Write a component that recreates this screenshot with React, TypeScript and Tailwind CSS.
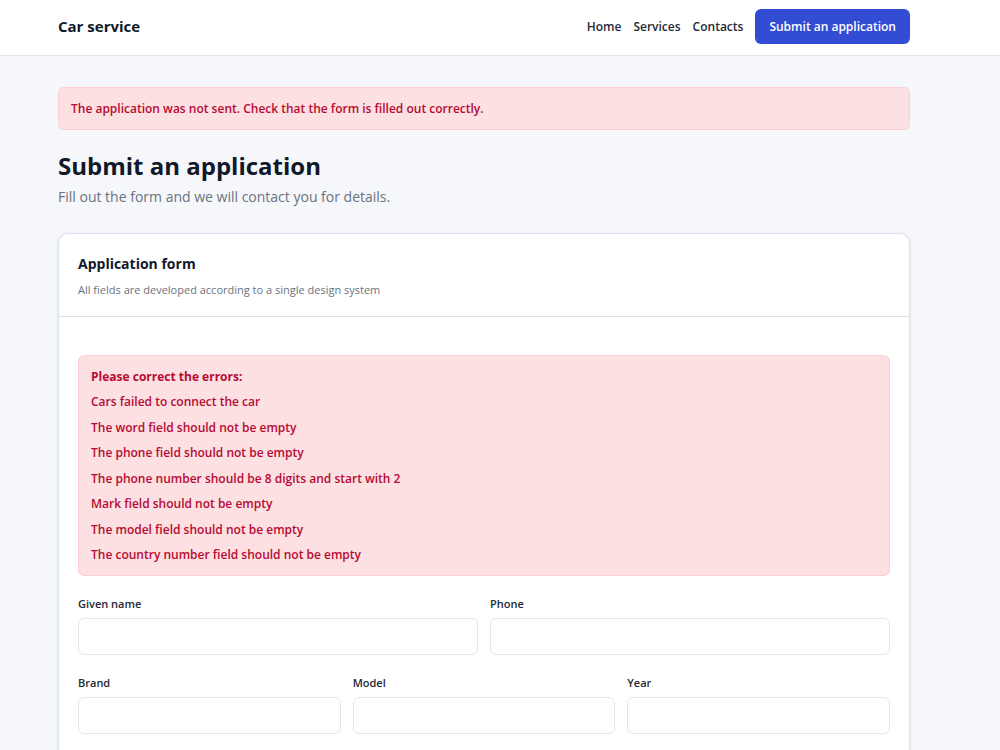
import React from "react";

const navLinks = ["Home", "Services", "Contacts"];

const errors = [
  "Cars failed to connect the car",
  "The word field should not be empty",
  "The phone field should not be empty",
  "The phone number should be 8 digits and start with 2",
  "Mark field should not be empty",
  "The model field should not be empty",
  "The country number field should not be empty",
];

function Field({ id, label, type = "text" }: { id: string; label: string; type?: string }) {
  return (
    <div className="flex min-w-0 flex-col gap-1.5">
      <label htmlFor={id} className="text-[11px] leading-4 font-semibold text-[#1f2937]">
        {label}
      </label>
      <input
        id={id}
        name={id}
        type={type}
        className="h-[37px] w-full rounded-md border border-[#dfe7f1] bg-white px-3 text-[12px] text-[#111827] outline-none focus:border-[#324dd3]"
      />
    </div>
  );
}

export default function App() {
  return (
    <div className="min-h-screen overflow-x-hidden bg-[#f5f7fb] font-['Open_Sans','Noto_Sans',sans-serif] text-[#111827]">
      <header className="border-b border-[#e2e8f0] bg-white">
        <div className="flex items-center justify-between pt-[9px] pr-[90px] pb-[11px] pl-[58px]">
          <a href="#" className="text-[15px] font-bold">
            Car service
          </a>
          <nav className="flex items-center gap-3 text-[12px] font-semibold text-[#1f2937]">
            {navLinks.map((name) => (
              <a key={name} href="#">
                {name}
              </a>
            ))}
            <a href="#form" className="rounded-md bg-[#324dd3] px-3.5 py-2 leading-[19px] font-semibold text-white">
              Submit an application
            </a>
          </nav>
        </div>
      </header>

      <main className="pt-[31px] pr-[90px] pb-8 pl-[58px]">
        <div role="alert" className="rounded-md border border-[#fbcfd3] bg-[#fce0e2] px-3 pt-[13px] pb-3 text-[12px] leading-4 font-semibold text-[#b80a32]">
          The application was not sent. Check that the form is filled out correctly.
        </div>
        <h1 className="mt-5 text-[24px] leading-8 font-bold">Submit an application</h1>
        <p className="mt-1 text-[14px] leading-[22px] text-[#6b7280]">
          Fill out the form and we will contact you for details.
        </p>

        <section className="mt-[25px] rounded-[10px] border border-[#dae3ed] bg-white shadow-sm">
          <div className="border-b border-[#dae3ed] px-[19px] pt-5 pb-[18px]">
            <h2 className="text-[14px] leading-5 font-bold">Application form</h2>
            <p className="mt-2 text-[11px] leading-4 text-[#6b7280]">
              All fields are developed according to a single design system
            </p>
          </div>
          <form id="form" className="flex flex-col gap-5 px-[19px] pt-[38px] pb-16">
            <div role="alert" className="flex min-h-[221px] flex-col justify-between rounded-md border border-[#fbcfd3] bg-[#fce0e2] px-3 py-2 text-[12px] leading-[25px] font-semibold text-[#b80a32]">
              <p className="font-bold">Please correct the errors:</p>
              <ul className="contents">
                {errors.map((error) => (
                  <li key={error}>{error}</li>
                ))}
              </ul>
            </div>
            <div className="grid grid-cols-2 gap-3">
              <Field id="name" label="Given name" />
              <Field id="phone" label="Phone" type="tel" />
            </div>
            <div className="grid grid-cols-3 gap-3">
              <Field id="brand" label="Brand" />
              <Field id="model" label="Model" />
              <Field id="year" label="Year" />
            </div>
          </form>
        </section>
      </main>
    </div>
  );
}
